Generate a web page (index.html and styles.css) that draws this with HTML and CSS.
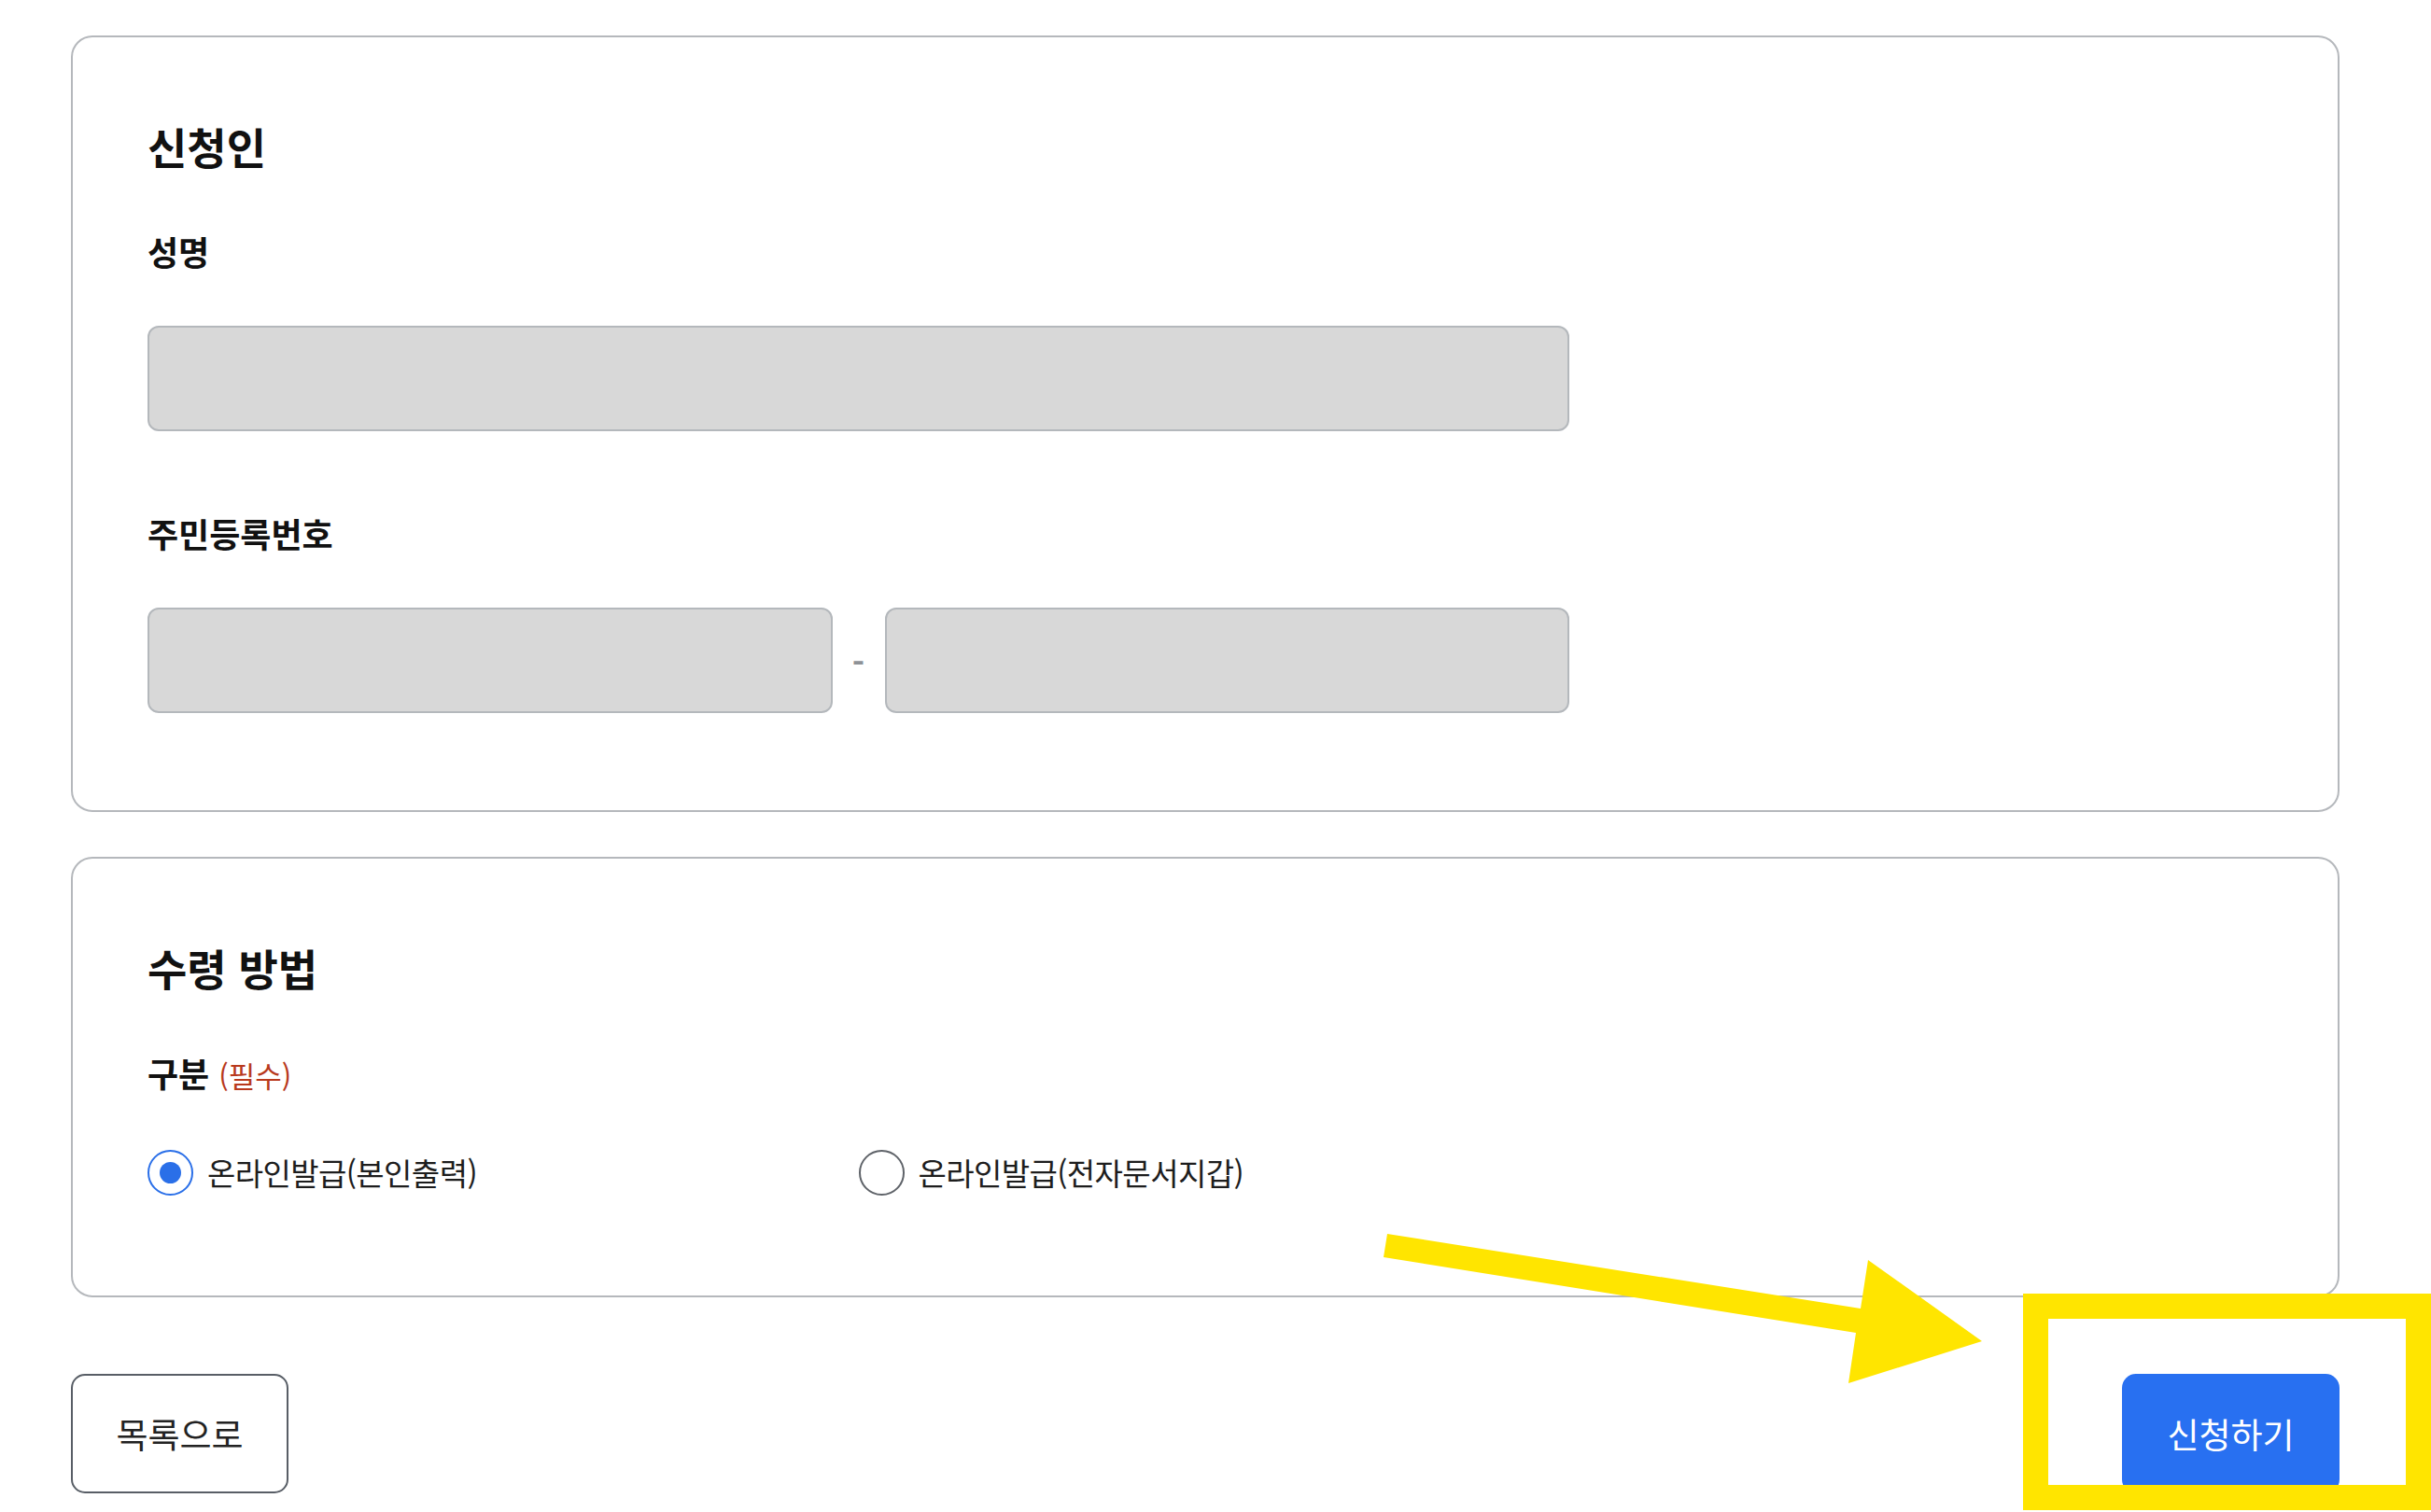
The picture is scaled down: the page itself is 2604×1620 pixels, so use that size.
FILE: index.html
```html
<!DOCTYPE html>
<html lang="ko">
<head>
  <meta charset="UTF-8">
  <meta name="viewport" content="width=device-width, initial-scale=1.0">
  <title>증명서 신청</title>
  <link rel="stylesheet" href="styles.css">
</head>

<body>

<main class="page">

  <!-- 신청인 정보 -->
  <section class="card">
    <h2 class="card-title">신청인</h2>

    <div class="field">
      <label class="field-label" for="name">성명</label>
      <input class="text-input" type="text" id="name" readonly>
    </div>

    <div class="field">
      <label class="field-label" for="rrnFront">주민등록번호</label>
      <div class="rrn">
        <input class="text-input" type="text" id="rrnFront" readonly>
        <span class="rrn-dash">-</span>
        <input class="text-input" type="password" id="rrnBack" readonly>
      </div>
    </div>
  </section>

  <!-- 수령 방법 -->
  <section class="card">
    <h2 class="card-title">수령 방법</h2>

    <div class="field">
      <p class="field-label">구분 <span class="required">(필수)</span></p>
      <div class="radio-group">
        <label class="radio">
          <input type="radio" name="receive" value="print" checked>
          <span>온라인발급(본인출력)</span>
        </label>
        <label class="radio">
          <input type="radio" name="receive" value="wallet">
          <span>온라인발급(전자문서지갑)</span>
        </label>
      </div>
    </div>
  </section>

  <div class="actions">
    <button class="btn btn-outline" type="button">목록으로</button>
    <button class="btn btn-primary" type="button">신청하기</button>
  </div>

</main>

<!-- 캡처 위 강조 표시 -->
<svg class="annotation" width="2604" height="1620" viewBox="0 0 2604 1620">
  <polygon points="1486,1322 1993,1402 2001,1350 2123,1437 1980,1482 1988,1428 1482,1347" fill="#ffe500"/>
  <rect x="2180.5" y="1399.5" width="410" height="205" fill="none" stroke="#ffe500" stroke-width="27"/>
</svg>

</body>
</html>
```

FILE: styles.css
```css
body {
  font-family: "Noto Sans CJK KR", "Noto Sans", sans-serif;
  background-color: #fff;
  color: #111;
  margin: 0;
}

.page {
  width: 2430px;
  padding: 38px 0 60px 76px;
}

.card {
  border: 2px solid #b5b8bc;
  border-radius: 23px;
  padding: 85px 80px 104px;
  margin-bottom: 48px;
}

.card-title {
  font-size: 46px;
  font-weight: 700;
  line-height: 62px;
  margin: 0;
}

.field {
  margin-top: 58px;
  width: 1523px;
}

.field + .field {
  margin-top: 85px;
}

.field-label {
  display: block;
  font-size: 36px;
  font-weight: 700;
  line-height: 48px;
  margin: 0 0 56px;
}

.required {
  color: #b8391c;
  font-size: 31px;
  font-weight: 400;
}

.text-input {
  box-sizing: border-box;
  width: 100%;
  height: 113px;
  background-color: #d8d8d8;
  border: 2px solid #b4b8bc;
  border-radius: 12px;
  padding: 0 24px;
  font-family: inherit;
  font-size: 34px;
}

.text-input:focus {
  outline: none;
}

/* 주민등록번호 앞/뒤 */
.rrn {
  display: flex;
  align-items: center;
}

.rrn .text-input {
  flex: 1;
}

.rrn-dash {
  width: 56px;
  text-align: center;
  color: #8e9196;
  font-size: 36px;
  font-weight: 700;
}

.radio-group {
  display: grid;
  grid-template-columns: 1fr 1fr;
  margin-bottom: 3px;
}

.radio {
  display: flex;
  align-items: center;
  gap: 15px;
  font-size: 33px;
  line-height: 49px;
  letter-spacing: -0.6px;
  color: #1d1d1d;
  cursor: pointer;
}

.radio input {
  appearance: none;
  box-sizing: border-box;
  width: 49px;
  height: 49px;
  margin: 0;
  border: 2px solid #5f6369;
  border-radius: 50%;
  display: flex;
  align-items: center;
  justify-content: center;
  cursor: pointer;
}

.radio input:checked {
  border-color: #2a6fe8;
}

.radio input:checked::after {
  content: "";
  width: 23px;
  height: 23px;
  border-radius: 50%;
  background-color: #2a6fe8;
}

.actions {
  display: flex;
  justify-content: space-between;
  margin-top: 82px;
}

.btn {
  width: 233px;
  height: 128px;
  border-radius: 15px;
  font-family: inherit;
  font-size: 37px;
  cursor: pointer;
}

.btn-outline {
  background-color: #fff;
  border: 2px solid #585e66;
  color: #222;
}

.btn-primary {
  background-color: #2870f1;
  border: none;
  color: #fff;
}

.annotation {
  position: absolute;
  top: 0;
  left: 0;
  pointer-events: none;
}
```
